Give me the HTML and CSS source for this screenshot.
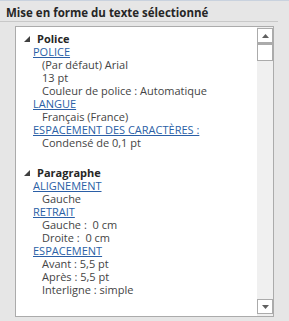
FILE: index.html
```html
<!DOCTYPE html>
<html lang="fr">
<head>
    <meta charset="UTF-8">
    <title>Mise en forme du texte sélectionné</title>
    <link rel="stylesheet" href="styles.css">
</head>
<body>

    <div class="pane-title">Mise en forme du texte sélectionné</div>

    <div class="reveal-box">
        <div class="reveal-list">
            <div class="group">
                <div class="group-head"><svg class="twisty" width="6" height="6" viewBox="0 0 6 6"><polygon points="0,6 6,6 6,0" fill="#404040"/></svg>Police</div>
                <a class="prop" href="#">POLICE</a>
                <div class="val">(Par défaut) Arial</div>
                <div class="val">13 pt</div>
                <div class="val">Couleur de police : Automatique</div>
                <a class="prop" href="#">LANGUE</a>
                <div class="val">Français (France)</div>
                <a class="prop" href="#">ESPACEMENT DES CARACTÈRES :</a>
                <div class="val">Condensé de 0,1 pt</div>
            </div>
            <div class="group">
                <div class="group-head"><svg class="twisty" width="6" height="6" viewBox="0 0 6 6"><polygon points="0,6 6,6 6,0" fill="#404040"/></svg>Paragraphe</div>
                <a class="prop" href="#">ALIGNEMENT</a>
                <div class="val">Gauche</div>
                <a class="prop" href="#">RETRAIT</a>
                <div class="val">Gauche :&nbsp; 0 cm</div>
                <div class="val">Droite :&nbsp; 0 cm</div>
                <a class="prop" href="#">ESPACEMENT</a>
                <div class="val">Avant : 5,5 pt</div>
                <div class="val">Après : 5,5 pt</div>
                <div class="val">Interligne : simple</div>
            </div>
        </div>

        <div class="scrollbar">
            <div class="sb-btn"><svg width="7" height="4" viewBox="0 0 7 4"><polygon points="0,4 7,4 3.5,0" fill="#606060"/></svg></div>
            <div class="sb-thumb"></div>
            <div class="sb-track"></div>
            <div class="sb-btn"><svg width="7" height="4" viewBox="0 0 7 4"><polygon points="0,0 7,0 3.5,4" fill="#606060"/></svg></div>
        </div>
    </div>

</body>
</html>
```

FILE: styles.css
```css
body {
    margin: 0;
    width: 289px;
    height: 320px;
    background-color: #e6e6e6;
    border-top: 1px solid #c9d2de;
    font-family: 'Open Sans', 'Noto Sans', sans-serif;
    font-size: 11px;
    color: #444;
    overflow: hidden;
}

.pane-title {
    margin-right: 11px;
    padding: 4px 0 0 6px;
    height: 16px;
    font-weight: bold;
    font-size: 11.5px;
    color: #262626;
    border-bottom: 1px solid #c8c8c8;
}

.reveal-box {
    display: flex;
    margin: 4px 15px 0 15px;
    height: 289px;
    background-color: #fff;
    border: 1px solid #ababab;
}

.reveal-list {
    flex: 1;
    padding: 5px 0 0 8px;
    line-height: 13px;
}

.group {
    margin-bottom: 17px;
}

.group-head {
    display: flex;
    align-items: center;
    font-weight: bold;
    color: #262626;
}

.twisty {
    margin: 0 7px 0 0;
}

.prop {
    display: block;
    width: max-content;
    margin-left: 9px;
    color: #2b5fa6;
    text-decoration: underline;
}

.val {
    margin-left: 18px;
}

.scrollbar {
    display: flex;
    flex-direction: column;
    width: 16px;
    background-color: #f0f0f0;
}

.sb-btn {
    display: flex;
    align-items: center;
    justify-content: center;
    height: 13px;
    margin: 1px 0 0 0;
    background-color: #fff;
    border: 1px solid #ababab;
}

.sb-btn:last-child {
    margin: 0 0 2px 0;
}

.sb-thumb {
    height: 15px;
    background-color: #fff;
    border: 1px solid #ababab;
    border-top-width: 2px;
}

.sb-track {
    flex: 1;
}
```
